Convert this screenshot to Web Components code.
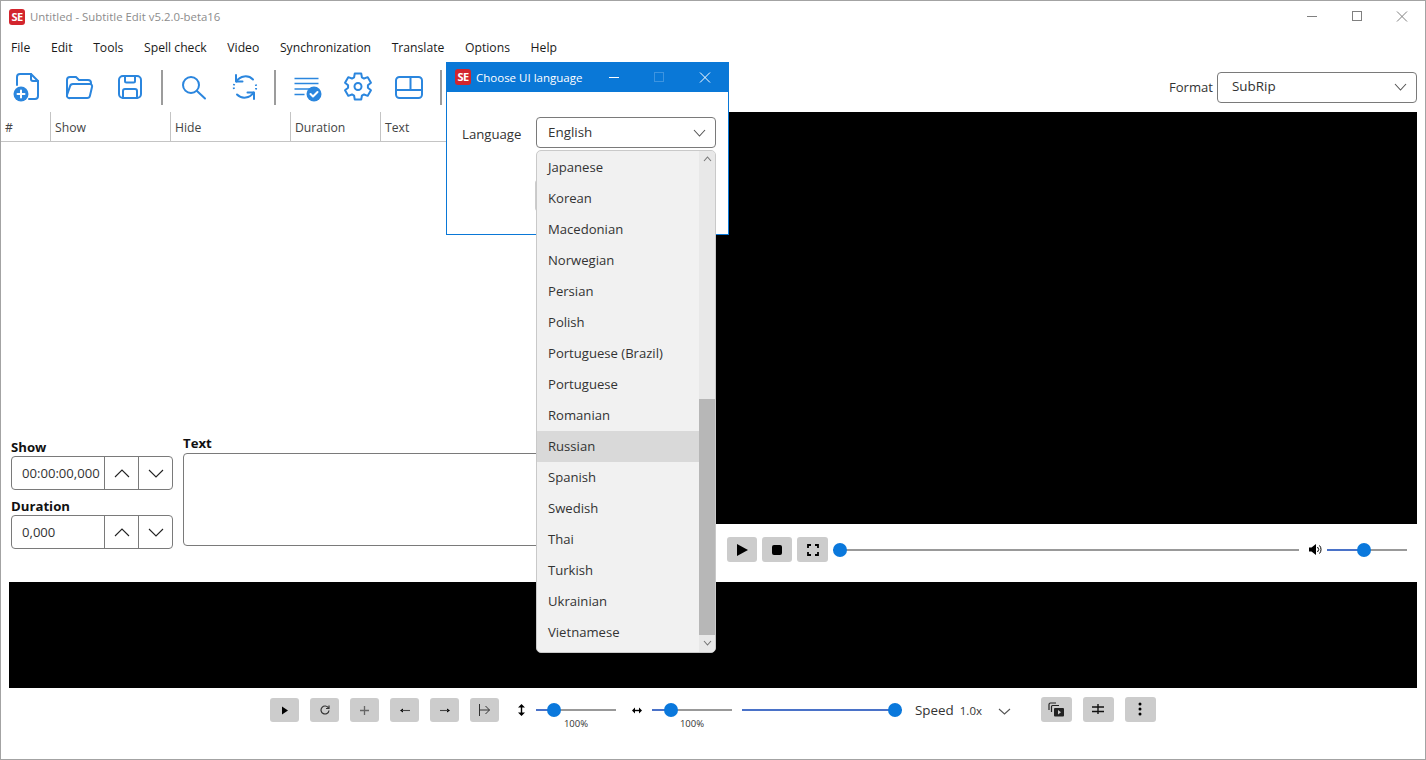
<!DOCTYPE html>
<html>
<head>
<meta charset="utf-8">
<title>Subtitle Edit</title>
<style>
  html, body { margin: 0; background: #fff; overflow: hidden; }
  body { font-family: "Open Sans", "Noto Sans", sans-serif; font-size: 13px; color: #1a1a1a; }
</style>
</head>
<body>
<se-window>
  <se-titlebar></se-titlebar>
  <se-menubar></se-menubar>
  <se-toolbar></se-toolbar>
  <se-workspace></se-workspace>
  <se-waveform></se-waveform>
  <se-wavebar></se-wavebar>
  <se-language-dialog></se-language-dialog>
</se-window>

<script>
// ---- Helpers ----
const BLUE = "#2b86de";

function chevron(w, h, dir, color) {
  const d = dir === "up" ? `M1 ${h - 1}L${w / 2} 1L${w - 1} ${h - 1}` : `M1 1L${w / 2} ${h - 1}L${w - 1} 1`;
  return `<svg width="${w}" height="${h}" viewBox="0 0 ${w} ${h}" fill="none" stroke="${color || "#333"}" stroke-width="1.1"><path d="${d}"/></svg>`;
}

// Sechs Zaehne, passend zum Zahnrad der Toolbar
function gearPath(cx, cy, outer, inner) {
  const pts = [];
  for (let i = 0; i < 6; i++) {
    const a = (i * 60 - 90) * Math.PI / 180;
    [[-0.4, inner], [-0.24, outer], [0.24, outer], [0.4, inner]].forEach(([da, r]) => {
      pts.push((cx + r * Math.cos(a + da)).toFixed(2) + " " + (cy + r * Math.sin(a + da)).toFixed(2));
    });
  }
  return "M" + pts.join("L") + "Z";
}

class ShadowBase extends HTMLElement {
  constructor(html) {
    super();
    const tpl = document.createElement("template");
    tpl.innerHTML = html;
    this.attachShadow({ mode: "open" }).appendChild(tpl.content.cloneNode(true));
  }
}

const LOGO = `<span style="display:inline-flex;align-items:center;justify-content:center;width:16px;height:16px;border-radius:3px;background:#d3252d;color:#fff;font:700 11px/16px 'Open Sans',sans-serif;letter-spacing:-.5px;flex:none">SE</span>`;

// ---- Fenster ----
class SeWindow extends ShadowBase {
  constructor() {
    super(`<style>
      :host { display: flex; flex-direction: column; position: relative; box-sizing: border-box;
              width: 1426px; height: 760px; border: 1px solid #a3a3a3; overflow: hidden; background: #fff; }
    </style><slot></slot>`);
  }
}
customElements.define("se-window", SeWindow);

// ---- Titelleiste ----
class SeTitlebar extends ShadowBase {
  constructor() {
    super(`<style>
      :host { display: flex; align-items: center; height: 31px; padding-left: 8px; flex: none; }
      .t { margin-left: 5px; color: #8c8c8c; font-size: 11.4px; white-space: nowrap; }
      .ctl { margin-left: auto; display: flex; }
      .ctl svg { display: block; width: 45px; height: 30px; }
    </style>
    ${LOGO}<span class="t">Untitled - Subtitle Edit v5.2.0-beta16</span>
    <div class="ctl">
      <svg viewBox="0 0 45 30" stroke="#808080" fill="none"><path d="M17 14.5h10"/></svg>
      <svg viewBox="0 0 45 30" stroke="#808080" fill="none"><rect x="17.5" y="9.5" width="9" height="9"/></svg>
      <svg viewBox="0 0 45 30" stroke="#808080" fill="none"><path d="M17 9.5l10 10M27 9.5l-10 10"/></svg>
    </div>`);
  }
}
customElements.define("se-titlebar", SeTitlebar);

// ---- Menue ----
class SeMenubar extends ShadowBase {
  constructor() {
    const items = ["File", "Edit", "Tools", "Spell check", "Video", "Synchronization", "Translate", "Options", "Help"];
    super(`<style>
      :host { display: flex; align-items: center; height: 30px; padding-left: 10px; gap: 20.6px; flex: none;
              font-size: 12.2px; color: #1a1a1a; }
    </style>${items.map(i => `<span>${i}</span>`).join("")}`);
  }
}
customElements.define("se-menubar", SeMenubar);

// ---- Toolbar ----
class SeToolbar extends ShadowBase {
  constructor() {
    const s = `fill="none" stroke="${BLUE}" stroke-width="2" stroke-linecap="round" stroke-linejoin="round"`;
    const ic = (body, st) => `<svg width="32" height="32" viewBox="0 0 32 32" ${s} ${st ? `style="${st}"` : ""}>${body}</svg>`;
    super(`<style>
      :host { display: flex; align-items: center; height: 50px; padding: 0 8px 0 9px; flex: none; }
      svg { display: block; flex: none; margin-right: 19px; }
      i { display: block; width: 2px; height: 35px; background: #9c9c9c; margin: 0 15px 0 -4px; flex: none; }
      .fmt { margin-left: auto; display: flex; align-items: center; gap: 4px; font-size: 13.1px; color: #333; }
      se-combo { width: 200px; }
    </style>
    ${ic(`<path d="M7 14V6a3 3 0 0 1 3-3h11l7 7v15a3 3 0 0 1-3 3h-6"/><path d="M21 3v5a2 2 0 0 0 2 2h5"/><circle cx="11" cy="23" r="7.5" fill="${BLUE}" stroke="none"/><path d="M7.5 23h7M11 19.5v7" stroke="#fff"/>`, "margin-right:21px")}
    ${ic(`<path d="M4 24V9a3 3 0 0 1 3-3h6l3 3h9a3 3 0 0 1 3 3v1"/><path d="M7 27h17a3 3 0 0 0 3-2.4l2-8.6a2.2 2.2 0 0 0-2-3H10a3 3 0 0 0-3 2.4L4 24a2.4 2.4 0 0 0 3 3z"/>`)}
    ${ic(`<rect x="5" y="5" width="22" height="22" rx="4"/><path d="M11 5v5a1.5 1.5 0 0 0 1.5 1.5h7a1.5 1.5 0 0 0 1.5-1.5V5"/><path d="M9 27v-7a2 2 0 0 1 2-2h10a2 2 0 0 1 2 2v7"/>`)}
    <i></i>
    ${ic(`<circle cx="13" cy="14" r="8"/><path d="M19 20l8 7.5"/>`)}
    ${ic(`<path d="M7.5 10.5A10.5 10.5 0 0 1 24 8.5"/><path d="M7 4v6.5h6.5"/><path d="M24.5 21.5A10.5 10.5 0 0 1 8 23.5"/><path d="M25 28v-6.5h-6.5"/><path d="M26.8 13.5a11 11 0 0 1 0 5.5M5.2 13a11 11 0 0 0 0 6" stroke-dasharray="1.5 2" stroke-linecap="butt"/>`)}
    <i style="margin-left:-6px"></i>
    ${ic(`<path d="M3.5 7.5h24M3.5 12.5h24M3.5 18h16M3.5 23.5h10" stroke-width="1.7" stroke-linecap="butt"/><circle cx="23" cy="23" r="7.5" fill="${BLUE}" stroke="none"/><path d="M19.5 23l2.500 2.500 4.500-4.500" stroke="#fff"/>`)}
    ${ic(`<path d="${gearPath(16, 15.5, 13.5, 10)}"/><circle cx="16" cy="15.5" r="3.5"/>`)}
    ${ic(`<rect x="3" y="6" width="26" height="21" rx="3.5"/><path d="M3 19h26M17.5 6v13"/>`)}
    <i></i>
    <div class="fmt"><span>Format</span><se-combo label="SubRip" style="height:31px"></se-combo></div>`);
  }
}
customElements.define("se-toolbar", SeToolbar);

// ---- Combobox ----
class SeCombo extends ShadowBase {
  constructor() {
    super(`<style>
      :host { display: flex; align-items: center; box-sizing: border-box; border: 1px solid #7a7a7a; border-radius: 4px;
              padding: 0 9px 0 var(--combo-pad, 14px); font-size: 13.4px; color: #333; background: #fff; }
      svg { margin-left: auto; display: block; }
      span { position: relative; top: -1px; }
    </style><span id="l"></span>${chevron(13, 8, "down", "#555")}`);
  }
  connectedCallback() {
    this.shadowRoot.getElementById("l").textContent = this.getAttribute("label") || "";
  }
}
customElements.define("se-combo", SeCombo);

// ---- Arbeitsbereich: Liste + Editor links, Video rechts ----
class SeWorkspace extends ShadowBase {
  constructor() {
    super(`<style>
      :host { display: flex; height: 470px; flex: none; }
      .left { width: 715px; display: flex; flex-direction: column; flex: none; }
      .right { flex: 1; margin-right: 8px; display: flex; flex-direction: column; min-width: 0; }
      .head { display: flex; height: 29px; border-bottom: 1px solid #c4c4c4; font-size: 12.2px; color: #444; flex: none; }
      .head span { box-sizing: border-box; padding: 7px 0 0 4px; border-left: 1px solid #c4c4c4; }
      .head span:first-child { border-left: 0; }
      .list { flex: 1; }
      .editor { display: flex; height: 147px; padding-left: 10px; flex: none; }
      .times { width: 162px; margin-right: 10px; padding-top: 5px; }
      .lbl { display: block; font-weight: 700; font-size: 13.2px; line-height: 14px; color: #111; }
      se-time-field { margin: 2px 0 9px; }
      .txt { flex: 1; padding-top: 1px; }
      .box { box-sizing: border-box; height: 93px; margin-top: 3px; border: 1px solid #7a7a7a; border-radius: 4px; }
      .video { height: 412px; background: #000; flex: none; }
      .ctrls { display: flex; align-items: center; padding: 13px 10px 0 11px; }
      se-small-button { margin-right: 5px; }
      .vol { margin: 0 4px 0 10px; display: block; }
    </style>
    <div class="left">
      <div class="head">
        <span style="width:49px;">#</span><span style="width:120px">Show</span><span style="width:120px">Hide</span><span style="width:90px">Duration</span><span style="flex:1">Text</span>
      </div>
      <div class="list"></div>
      <div class="editor">
        <div class="times">
          <span class="lbl">Show</span><se-time-field value="00:00:00,000"></se-time-field>
          <span class="lbl">Duration</span><se-time-field value="0,000"></se-time-field>
        </div>
        <div class="txt"><span class="lbl">Text</span><div class="box"></div></div>
      </div>
    </div>
    <div class="right">
      <div class="video"></div>
      <div class="ctrls">
        <se-small-button w="30" h="25"><svg width="14" height="14" viewBox="0 0 14 14"><path d="M2 1l11 6-11 6z"/></svg></se-small-button>
        <se-small-button w="30" h="25"><svg width="12" height="12" viewBox="0 0 12 12"><rect x="1" y="1" width="10" height="10" rx="2"/></svg></se-small-button>
        <se-small-button w="31" h="25"><svg width="12" height="12" viewBox="0 0 12 12" fill="none" stroke="#000" stroke-width="1.8"><path d="M1 4V1h3M8 1h3v3M11 8v3H8M4 11H1V8"/></svg></se-small-button>
        <se-slider w="466" at="7" fillto="0"></se-slider>
        <svg class="vol" width="14" height="11" viewBox="0 0 14 11"><path d="M0 3.5h2.500L7 0v11L2.500 7.500H0z"/><path d="M8.500 3a3.500 3.500 0 0 1 0 5M10.500 1.500a6 6 0 0 1 0 8" fill="none" stroke="#000"/></svg>
        <se-slider w="80" at="37" fillto="37"></se-slider>
      </div>
    </div>`);
  }
}
customElements.define("se-workspace", SeWorkspace);

// ---- Zeitfeld mit Auf/Ab ----
class SeTimeField extends ShadowBase {
  constructor() {
    super(`<style>
      :host { display: flex; box-sizing: border-box; width: 162px; height: 34px; border: 1px solid #7a7a7a; border-radius: 4px; font-size: 13.1px; color: #333; }
      .v { width: 92px; padding-left: 10px; box-sizing: border-box; line-height: 33px; white-space: nowrap; overflow: hidden; }
      .b { width: 34px; box-sizing: border-box; border-left: 1px solid #7a7a7a; display: flex; align-items: center; justify-content: center; }
    </style><div class="v" id="v"></div><div class="b">${chevron(16, 9, "up", "#222")}</div><div class="b">${chevron(16, 9, "down", "#222")}</div>`);
  }
  connectedCallback() {
    this.shadowRoot.getElementById("v").textContent = this.getAttribute("value");
  }
}
customElements.define("se-time-field", SeTimeField);

// ---- Grauer Knopf ----
class SeSmallButton extends ShadowBase {
  constructor() {
    super(`<style>
      :host { display: inline-flex; align-items: center; justify-content: center; background: #ccc; border-radius: 3px; flex: none; }
      ::slotted(svg) { display: block; }
    </style><slot></slot>`);
  }
  connectedCallback() {
    this.style.width = this.getAttribute("w") + "px";
    this.style.height = this.getAttribute("h") + "px";
  }
}
customElements.define("se-small-button", SeSmallButton);

// ---- Slider ----
class SeSlider extends ShadowBase {
  constructor() {
    super(`<style>
      :host { display: block; position: relative; height: 14px; flex: none; }
      .track { position: absolute; left: 0; right: 0; top: 6px; height: 2px; background: #999; }
      .fill { position: absolute; left: 0; top: 6px; height: 2px; background: #4a72c8; }
      .thumb { position: absolute; top: 0; width: 14px; height: 14px; margin-left: -7px; border-radius: 50%; background: #0a78dc; }
    </style><div class="track"></div><div class="fill" id="f"></div><div class="thumb" id="t"></div>`);
  }
  connectedCallback() {
    this.style.width = this.getAttribute("w") + "px";
    this.shadowRoot.getElementById("t").style.left = this.getAttribute("at") + "px";
    this.shadowRoot.getElementById("f").style.width = this.getAttribute("fillto") + "px";
  }
}
customElements.define("se-slider", SeSlider);

// ---- Wellenform ----
class SeWaveform extends ShadowBase {
  constructor() {
    super(`<style>:host { display: block; height: 106px; margin: 0 8px; background: #000; flex: none; }</style>`);
  }
}
customElements.define("se-waveform", SeWaveform);

// ---- Leiste unter der Wellenform ----
class SeWavebar extends ShadowBase {
  constructor() {
    const a = `fill="none" stroke="#333" stroke-width="1.2"`;
    const btn = (svg) => `<se-small-button w="29" h="24" style="margin-right:11px">${svg}</se-small-button>`;
    super(`<style>
      :host { display: flex; padding: 10px 0 0 269px; font-size: 13.4px; color: #333; flex: none; position: relative; }
      .row { display: flex; align-items: center; height: 24px; }
      .col { position: relative; }
      .pct { position: absolute; left: 0; right: 0; top: 14px; text-align: center; font-size: 9.5px; color: #333; }
      .arr { display: block; flex: none; }
      .speed { margin-left: 13px; }
      .sv { font-size: 11.5px; margin-left: 6px; }
    </style>
    <div class="row">
      ${btn(`<svg width="8" height="9" viewBox="0 0 8 9"><path d="M1 .5l6 4-6 4z"/></svg>`)}
      ${btn(`<svg width="10" height="10" viewBox="0 0 10 10" ${a}><path d="M8.500 3A4 4 0 1 0 9 5.500"/><path d="M9 .5V3.500H6"/></svg>`)}
      ${btn(`<svg width="9" height="9" viewBox="0 0 9 9" stroke="#666" stroke-width="1.3"><path d="M0 4.500h9M4.500 0v9"/></svg>`)}
      ${btn(`<svg width="10" height="5" viewBox="0 0 10 5"><path d="M0 2.500L3 .5v4z"/><path d="M2 2.500h8" stroke="#444" stroke-width="1.1"/></svg>`)}
      ${btn(`<svg width="10" height="5" viewBox="0 0 10 5"><path d="M10 2.500L7 .5v4z"/><path d="M0 2.500h8" stroke="#444" stroke-width="1.1"/></svg>`)}
      ${btn(`<svg width="11" height="12" viewBox="0 0 11 12" fill="none" stroke="#333"><path d="M.5 0v12M.5 6h10M6.500 2l4 4-4 4"/></svg>`)}
      <svg class="arr" style="margin:0 11px 0 8px" width="7" height="12" viewBox="0 0 7 12"><path d="M3.500 0L7 3.500H0zM3.500 12L0 8.500h7z"/><path d="M3.500 2v8" stroke="#000" stroke-width="1.4"/></svg>
      <div class="col"><se-slider w="80" at="18" fillto="18"></se-slider><div class="pct">100%</div></div>
      <svg class="arr" style="margin:0 10px 0 16px" width="10" height="7" viewBox="0 0 10 7"><path d="M0 3.500L3 .5v6zM10 3.500L7 .5v6z"/><path d="M2 3.500h6" stroke="#000" stroke-width="1.4"/></svg>
      <div class="col"><se-slider w="80" at="19" fillto="19"></se-slider><div class="pct">100%</div></div>
      <se-slider w="160" at="153" fillto="153" style="margin-left:10px"></se-slider>
      <span class="speed">Speed</span><span class="sv">1.0x</span>
      <span style="margin:0 30px 0 16px;display:block">${chevron(13, 7, "down", "#555")}</span>
      <se-small-button w="31" h="25" style="margin:-2px 11px 0 0"><svg width="17" height="15" viewBox="0 0 17 15" fill="none" stroke="#222" stroke-width="1.2"><path d="M1 8V2.500A1.500 1.500 0 0 1 2.500 1H8"/><path d="M3.500 10V4.500A1 1 0 0 1 4.500 3.500H11"/><rect x="6" y="6" width="10" height="8.500" rx="1" fill="#222" stroke="none"/><path d="M10 8l3 2.200-3 2.200z" fill="#ccc" stroke="none"/></svg></se-small-button>
      <se-small-button w="31" h="25" style="margin:-2px 11px 0 0"><svg width="14" height="14" viewBox="0 0 14 14" stroke="#111" stroke-width="1.4"><path d="M1 5h12M1 9.500h12M7 2v10"/></svg></se-small-button>
      <se-small-button w="31" h="25" style="margin:-2px 0 0 0"><svg width="4" height="14" viewBox="0 0 4 14"><circle cx="2" cy="2" r="1.5"/><circle cx="2" cy="7" r="1.5"/><circle cx="2" cy="12" r="1.5"/></svg></se-small-button>
    </div>`);
  }
}
customElements.define("se-wavebar", SeWavebar);

// ---- Dialog: Sprache waehlen ----
class SeLanguageDialog extends ShadowBase {
  constructor() {
    super(`<style>
      :host { position: absolute; left: 445px; top: 61px; box-sizing: border-box; width: 283px; height: 173px;
              border: 1px solid #0a78d7; border-top: 0; background: #fff; display: block; }
      .bar { display: flex; align-items: center; height: 30px; background: #0a78d7; color: #fff; font-size: 11.5px; padding-left: 8px; }
      .bar .t { margin-left: 5px; }
      .ctl { margin-left: auto; display: flex; }
      .ctl svg { display: block; width: 46px; height: 30px; }
      .body { display: flex; align-items: flex-start; padding: 25px 12px 0 15px; }
      .body span { font-size: 13.2px; color: #333; width: 74px; margin-top: 8px; }
      se-combo { width: 180px; height: 31px; --combo-pad: 11px; }
      .ok { position: absolute; left: 88px; top: 118px; width: 70px; height: 31px; background: #ccc; border-radius: 3px; }
    </style>
    <div class="bar">${LOGO}<span class="t">Choose UI language</span>
      <div class="ctl">
        <svg viewBox="0 0 46 30" stroke="#fff" fill="none"><path d="M19 15.5h10"/></svg>
        <svg viewBox="0 0 46 30" stroke="#3d94e0" fill="none"><rect x="18.5" y="10.5" width="9" height="9"/></svg>
        <svg viewBox="0 0 46 30" stroke="#fff" fill="none"><path d="M18 10.5l10 10M28 10.500l-10 10"/></svg>
      </div>
    </div>
    <div class="body"><span>Language</span><se-combo label="English"></se-combo></div>
    <div class="ok"></div>
    <se-language-list></se-language-list>`);
  }
}
customElements.define("se-language-dialog", SeLanguageDialog);

// ---- Aufgeklappte Liste ----
class SeLanguageList extends ShadowBase {
  constructor() {
    const langs = ["Japanese", "Korean", "Macedonian", "Norwegian", "Persian", "Polish", "Portuguese (Brazil)", "Portuguese",
      "Romanian", "Russian", "Spanish", "Swedish", "Thai", "Turkish", "Ukrainian", "Vietnamese"];
    super(`<style>
      :host { position: absolute; left: 89px; top: 88px; box-sizing: border-box; width: 180px; height: 503px; display: flex;
              background: #f1f1f1; border: 1px solid #c9c9c9; border-radius: 5px; overflow: hidden; padding-top: 1px; }
      .rows { flex: 1; font-size: 13.1px; color: #333; }
      .row { height: 31px; line-height: 30px; padding-left: 11px; }
      .row.sel { background: #d9d9d9; }
      .bar { width: 16px; background: #e8e8e8; display: flex; flex-direction: column; margin-top: -1px; }
      .btn { height: 16px; display: flex; align-items: center; justify-content: center; flex: none; }
      .thumb { flex: none; height: 236px; margin-top: 232px; background: #b7b7b7; }
    </style>
    <div class="rows">${langs.map(l => `<div class="row${l === "Russian" ? " sel" : ""}">${l}</div>`).join("")}</div>
    <div class="bar">
      <div class="btn">${chevron(9, 6, "up", "#777")}</div>
      <div class="thumb"></div>
      <div class="btn">${chevron(9, 6, "down", "#777")}</div>
    </div>`);
  }
}
customElements.define("se-language-list", SeLanguageList);
</script>
</body>
</html>
